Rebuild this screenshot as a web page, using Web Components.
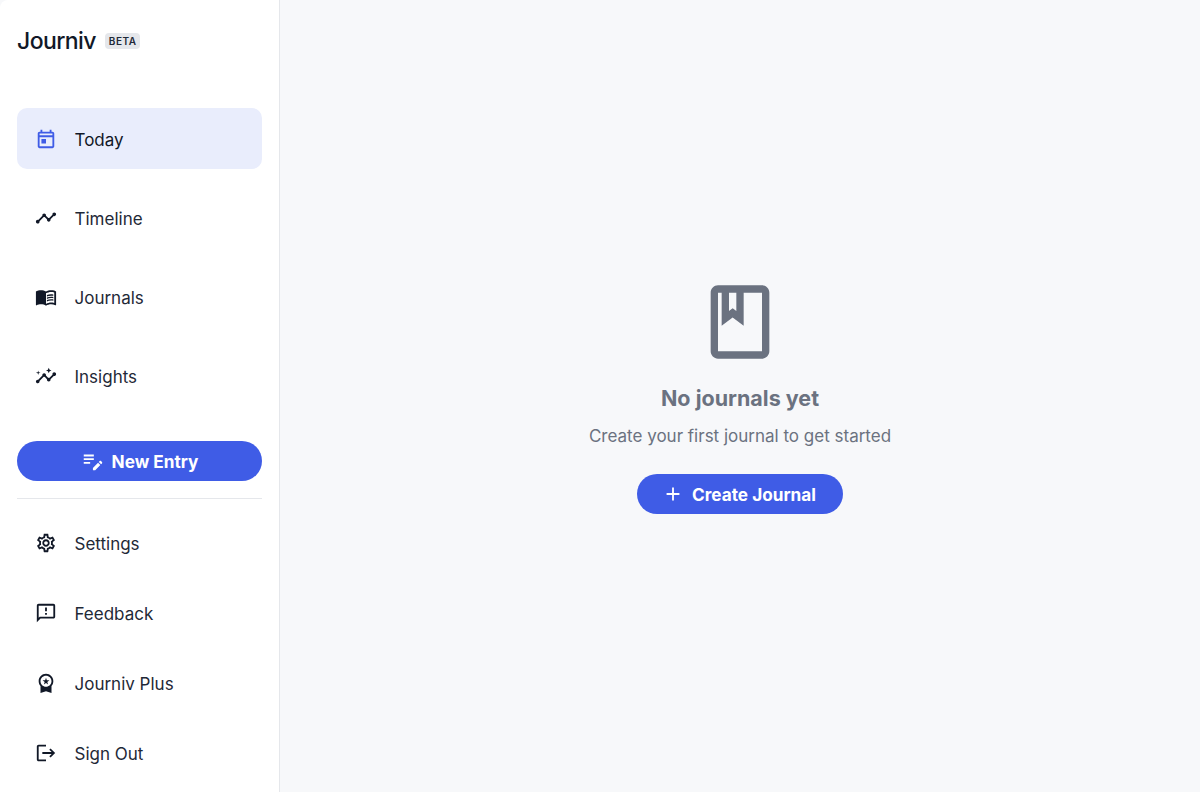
<!DOCTYPE html>
<html lang="en">
<head>
<meta charset="utf-8">
<title>Journiv</title>
<style>
    html, body {
        margin: 0;
        height: 100%;
        font-family: Inter, "Noto Sans", sans-serif;
        background: #f7f8fa;
    }
</style>
</head>
<body>
<app-shell>
    <app-sidebar slot="sidebar">
        <nav-item slot="primary" active label="Today">
            <svg viewBox="0 0 24 24"><path d="M19 4h-1V2h-2v2H8V2H6v2H5c-1.1 0-2 .9-2 2v14c0 1.1.9 2 2 2h14c1.1 0 2-.9 2-2V6c0-1.1-.9-2-2-2zm0 16H5V10h14v10zm0-12H5V6h14v2zM7 12h5v5H7z"/></svg>
        </nav-item>
        <nav-item slot="primary" label="Timeline">
            <svg viewBox="0 0 24 24"><path d="M23 8c0 1.1-.9 2-2 2-.18 0-.35-.02-.51-.07l-3.56 3.55c.05.16.07.34.07.52 0 1.1-.9 2-2 2s-2-.9-2-2c0-.18.02-.36.07-.52l-2.55-2.55c-.16.05-.34.07-.52.07s-.36-.02-.52-.07l-4.55 4.56c.05.16.07.33.07.51 0 1.1-.9 2-2 2s-2-.9-2-2 .9-2 2-2c.18 0 .35.02.51.07l4.56-4.55C8.02 9.36 8 9.18 8 9c0-1.1.9-2 2-2s2 .9 2 2c0 .18-.02.36-.07.52l2.55 2.55c.16-.05.34-.07.52-.07s.36.02.52.07l3.55-3.56C19.02 8.35 19 8.18 19 8c0-1.1.9-2 2-2s2 .9 2 2z"/></svg>
        </nav-item>
        <nav-item slot="primary" label="Journals">
            <svg viewBox="0 0 24 24"><path d="M21 5c-1.11-.35-2.33-.5-3.5-.5-1.95 0-4.05.4-5.5 1.5-1.45-1.1-3.55-1.5-5.5-1.5S2.45 4.9 1 6v14.65c0 .25.25.5.5.5.1 0 .15-.05.25-.05C3.1 20.45 5.05 20 6.5 20c1.95 0 4.05.4 5.5 1.5 1.35-.85 3.8-1.5 5.5-1.5 1.65 0 3.35.3 4.75 1.05.1.05.15.05.25.05.25 0 .5-.25.5-.5V6c-.6-.45-1.25-.75-2-1zm0 13.5c-1.1-.35-2.3-.5-3.5-.5-1.7 0-4.15.65-5.5 1.5V8c1.35-.85 3.8-1.5 5.5-1.5 1.2 0 2.4.15 3.5.5v11.5z"/><path d="M17.5 10.5c.88 0 1.73.09 2.5.26V9.24c-.79-.15-1.64-.24-2.5-.24-1.7 0-3.24.29-4.5.83v1.66c1.13-.64 2.7-.99 4.5-.99zM13 12.49v1.66c1.13-.64 2.7-.99 4.5-.99.88 0 1.73.09 2.5.26V11.9c-.79-.15-1.64-.24-2.5-.24-1.7 0-3.24.3-4.5.83zM17.5 14.33c-1.7 0-3.24.29-4.5.83v1.66c1.13-.64 2.7-.99 4.5-.99.88 0 1.73.09 2.5.26v-1.52c-.79-.16-1.64-.24-2.5-.24z"/></svg>
        </nav-item>
        <nav-item slot="primary" label="Insights">
            <svg viewBox="0 0 24 24"><path d="M21 8c-1.45 0-2.26 1.44-1.93 2.51l-3.55 3.56c-.3-.09-.74-.09-1.04 0l-2.55-2.55C12.27 10.45 11.46 9 10 9c-1.45 0-2.27 1.44-1.93 2.52l-4.56 4.55C2.44 15.74 1 16.55 1 18c0 1.1.9 2 2 2 1.45 0 2.26-1.44 1.93-2.51l4.55-4.56c.3.09.74.09 1.04 0l2.55 2.55C12.73 16.55 13.54 18 15 18c1.45 0 2.27-1.44 1.93-2.52l3.56-3.55c1.07.33 2.51-.48 2.51-1.93 0-1.1-.9-2-2-2z"/><path d="M15 9l.94-2.07L18 6l-2.06-.93L15 3l-.92 2.07L12 6l2.08.93zM3.5 11L4 9l2-.5L4 8l-.5-2L3 8l-2 .5L3 9z"/></svg>
        </nav-item>

        <pill-button slot="action" wide label="New Entry">
            <svg viewBox="0 0 24 24"><path d="M3 5h11v2H3zm0 4h11v2H3zm0 4h7v2H3zM13 22v-2.5l5.6-5.6 2.5 2.5L15.5 22zM19.4 13.1l1-1c.4-.4 1-.4 1.4 0l1.1 1.1c.4.4.4 1 0 1.4l-1 1z"/></svg>
        </pill-button>

        <nav-item slot="secondary" compact label="Settings">
            <svg viewBox="0 0 24 24"><path d="M19.43 12.98c.04-.32.07-.64.07-.98 0-.34-.03-.66-.07-.98l2.11-1.65c.19-.15.24-.42.12-.64l-2-3.46c-.09-.16-.26-.25-.44-.25-.06 0-.12.01-.17.03l-2.49 1c-.52-.4-1.08-.73-1.69-.98l-.38-2.65C14.46 2.18 14.25 2 14 2h-4c-.25 0-.46.18-.49.42l-.38 2.65c-.61.25-1.17.59-1.69.98l-2.49-1c-.06-.02-.12-.03-.18-.03-.17 0-.34.09-.43.25l-2 3.46c-.13.22-.07.49.12.64l2.11 1.65c-.04.32-.07.65-.07.98 0 .33.03.66.07.98l-2.11 1.65c-.19.15-.24.42-.12.64l2 3.46c.09.16.26.25.44.25.06 0 .12-.01.17-.03l2.49-1c.52.4 1.08.73 1.69.98l.38 2.65c.03.24.24.42.49.42h4c.25 0 .46-.18.49-.42l.38-2.65c.61-.25 1.17-.59 1.69-.98l2.49 1c.06.02.12.03.18.03.17 0 .34-.09.43-.25l2-3.46c.12-.22.07-.49-.12-.64l-2.11-1.65zm-1.98-1.71c.04.31.05.52.05.73 0 .21-.02.43-.05.73l-.14 1.13.89.7 1.08.84-.7 1.21-1.27-.51-1.04-.42-.9.68c-.43.32-.84.56-1.25.73l-1.06.43-.16 1.13-.2 1.35h-1.4l-.19-1.35-.16-1.13-1.06-.43c-.43-.18-.83-.41-1.23-.71l-.91-.7-1.06.43-1.27.51-.7-1.21 1.08-.84.89-.7-.14-1.13c-.03-.31-.05-.54-.05-.74s.02-.43.05-.73l.14-1.13-.89-.7-1.08-.84.7-1.21 1.27.51 1.04.42.9-.68c.43-.32.84-.56 1.25-.73l1.06-.43.16-1.13.2-1.35h1.39l.19 1.35.16 1.13 1.06.43c.43.18.83.41 1.23.71l.91.7 1.06-.43 1.27-.51.7 1.21-1.07.85-.89.7.14 1.13zM12 8c-2.21 0-4 1.79-4 4s1.79 4 4 4 4-1.79 4-4-1.79-4-4-4zm0 6c-1.1 0-2-.9-2-2s.9-2 2-2 2 .9 2 2-.9 2-2 2z"/></svg>
        </nav-item>
        <nav-item slot="secondary" compact label="Feedback">
            <svg viewBox="0 0 24 24"><path d="M20 2H4c-1.1 0-1.99.9-1.99 2L2 22l4-4h14c1.1 0 2-.9 2-2V4c0-1.1-.9-2-2-2zm0 14H5.17L4 17.17V4h16v12zm-9-4h2v2h-2zm0-6h2v4h-2z"/></svg>
        </nav-item>
        <nav-item slot="secondary" compact label="Journiv Plus">
            <svg viewBox="0 0 24 24"><path d="M9.68 13.69 12 11.93l2.31 1.76-.88-2.85L15.75 9h-2.84L12 6.19 11.09 9H8.25l2.31 1.84-.88 2.85zM20 10c0-4.42-3.58-8-8-8s-8 3.58-8 8c0 2.03.76 3.87 2 5.28V23l6-2 6 2v-7.72c1.24-1.41 2-3.25 2-5.28zm-8-6c3.31 0 6 2.69 6 6s-2.69 6-6 6-6-2.69-6-6 2.69-6 6-6z"/></svg>
        </nav-item>
        <nav-item slot="secondary" compact label="Sign Out">
            <svg viewBox="0 0 24 24"><path d="M17 7l-1.41 1.41L18.17 11H8v2h10.17l-2.58 2.58L17 17l5-5zM4 5h8V3H4c-1.1 0-2 .9-2 2v14c0 1.1.9 2 2 2h8v-2H4V5z"/></svg>
        </nav-item>
    </app-sidebar>

    <empty-state slot="main" heading="No journals yet" message="Create your first journal to get started">
        <svg slot="icon" viewBox="0 0 24 24"><path d="M18 2H6c-1.1 0-2 .9-2 2v16c0 1.1.9 2 2 2h12c1.1 0 2-.9 2-2V4c0-1.1-.9-2-2-2zM9 4h2v5l-1-.75L9 9V4zm9 16H6V4h1v9l3-2.25L13 13V4h5v16z"/></svg>
        <pill-button slot="action" label="Create Journal">
            <svg viewBox="0 0 24 24"><path d="M19 13h-6v6h-2v-6H5v-2h6V5h2v6h6v2z"/></svg>
        </pill-button>
    </empty-state>
</app-shell>

<script>
/**
 * Journiv page shell, sidebar, nav rows, buttons and the
 * empty state. Every element owns its styles in a shadow root.
 */

const shellTemplate = document.createElement('template');
shellTemplate.innerHTML = `
    <style>
        :host {
            display: grid;
            grid-template-columns: 280px 1fr;
            height: 792px;
            overflow: hidden;
        }
    </style>
    <slot name="sidebar"></slot>
    <slot name="main"></slot>
`;

class AppShell extends HTMLElement {
    constructor() {
        super();
        this.attachShadow({ mode: "open" }).append(shellTemplate.content.cloneNode(true));
    }
}
customElements.define('app-shell', AppShell);

const sidebarTemplate = document.createElement('template');
sidebarTemplate.innerHTML = `
    <style>
        :host {
            display: flex;
            flex-direction: column;
            box-sizing: border-box;
            height: 792px;
            padding: 0 17px;
            background: #fff;
            border-right: 1px solid #e5e7eb;
            border-top-left-radius: 8px;
        }
        .brand {
            display: flex;
            align-items: center;
            gap: 9px;
            height: 82px;
            margin-bottom: 26px;
        }
        .name {
            font-size: 23px;
            font-weight: 500;
            letter-spacing: -.6px;
            color: #111827;
        }
        .badge {
            padding: 2px 4px;
            border-radius: 4px;
            background: #e5e7eb;
            color: #1f2937;
            font-size: 10px;
            line-height: 12px;
            font-weight: 600;
            letter-spacing: .5px;
        }
        .primary {
            display: flex;
            flex-direction: column;
            gap: 18px;
            margin-bottom: 34.5px;
        }
        hr {
            width: 100%;
            margin: 17px 0 19.5px;
            border: 0;
            border-top: 1px solid #e5e7eb;
        }
        .secondary {
            display: flex;
            flex-direction: column;
            gap: 20px;
        }
    </style>
    <div class="brand"><span class="name">Journiv</span><span class="badge">BETA</span></div>
    <div class="primary"><slot name="primary"></slot></div>
    <slot name="action"></slot>
    <hr>
    <div class="secondary"><slot name="secondary"></slot></div>
`;

class AppSidebar extends HTMLElement {
    constructor() {
        super();
        this.attachShadow({ mode: "open" }).append(sidebarTemplate.content.cloneNode(true));
    }
}
customElements.define('app-sidebar', AppSidebar);

const navTemplate = document.createElement('template');
navTemplate.innerHTML = `
    <style>
        :host {
            display: flex;
            align-items: center;
            gap: 17.5px;
            box-sizing: border-box;
            height: 61px;
            padding-left: 18px;
            border-radius: 10px;
            font-size: 17px;
            font-weight: 400;
            cursor: pointer;
        }
        :host([compact]) { height: 50px; }
        :host([active]) { background: #e9edfc; }
        :host([active]) ::slotted(svg) { fill: #3f5ce6; }
        ::slotted(svg) {
            width: 22px;
            height: 22px;
            flex: none;
            fill: #111827;
        }
        span {
            padding-top: 2px;
            color: #1f2937;
        }
        :host([active]) span { color: #111827; }
    </style>
    <slot></slot>
    <span></span>
`;

class NavItem extends HTMLElement {
    constructor() {
        super();
        const shadow = this.attachShadow({ mode: "open" });
        shadow.append(navTemplate.content.cloneNode(true));
        shadow.querySelector('span').textContent = this.getAttribute('label');
    }
}
customElements.define('nav-item', NavItem);

const buttonTemplate = document.createElement('template');
buttonTemplate.innerHTML = `
    <style>
        :host {
            display: inline-flex;
            align-items: center;
            justify-content: center;
            gap: 8px;
            box-sizing: border-box;
            height: 40px;
            padding: 0 27px 0 25px;
            border-radius: 20px;
            background: #3f5ce6;
            color: #fff;
            font-size: 17.2px;
            font-weight: 700;
            cursor: pointer;
        }
        :host([wide]) {
            display: flex;
            gap: 9px;
            padding: 0;
        }
        ::slotted(svg) {
            width: 22px;
            height: 22px;
            flex: none;
            fill: #fff;
        }
        span { padding-top: 1px; }
    </style>
    <slot></slot>
    <span></span>
`;

class PillButton extends HTMLElement {
    constructor() {
        super();
        const shadow = this.attachShadow({ mode: "open" });
        shadow.append(buttonTemplate.content.cloneNode(true));
        shadow.querySelector('span').textContent = this.getAttribute('label');
    }
}
customElements.define('pill-button', PillButton);

const emptyTemplate = document.createElement('template');
emptyTemplate.innerHTML = `
    <style>
        :host {
            display: flex;
            flex-direction: column;
            align-items: center;
            justify-content: center;
            background: #f7f8fa;
            color: #6b7280;
            text-align: center;
        }
        ::slotted(svg) {
            width: 88px;
            height: 88px;
            fill: #6b7280;
        }
        h2 {
            margin: 17px 0 0;
            font-size: 21.5px;
            line-height: 30px;
            font-weight: 700;
        }
        p {
            margin: 11px 0 0;
            font-size: 17px;
            line-height: 24px;
        }
        .action { margin-top: 26px; }
    </style>
    <slot name="icon"></slot>
    <h2></h2>
    <p></p>
    <div class="action"><slot name="action"></slot></div>
`;

class EmptyState extends HTMLElement {
    constructor() {
        super();
        const shadow = this.attachShadow({ mode: "open" });
        shadow.append(emptyTemplate.content.cloneNode(true));
        shadow.querySelector('h2').textContent = this.getAttribute('heading');
        shadow.querySelector('p').textContent = this.getAttribute('message');
    }
}
customElements.define('empty-state', EmptyState);
</script>
</body>
</html>
